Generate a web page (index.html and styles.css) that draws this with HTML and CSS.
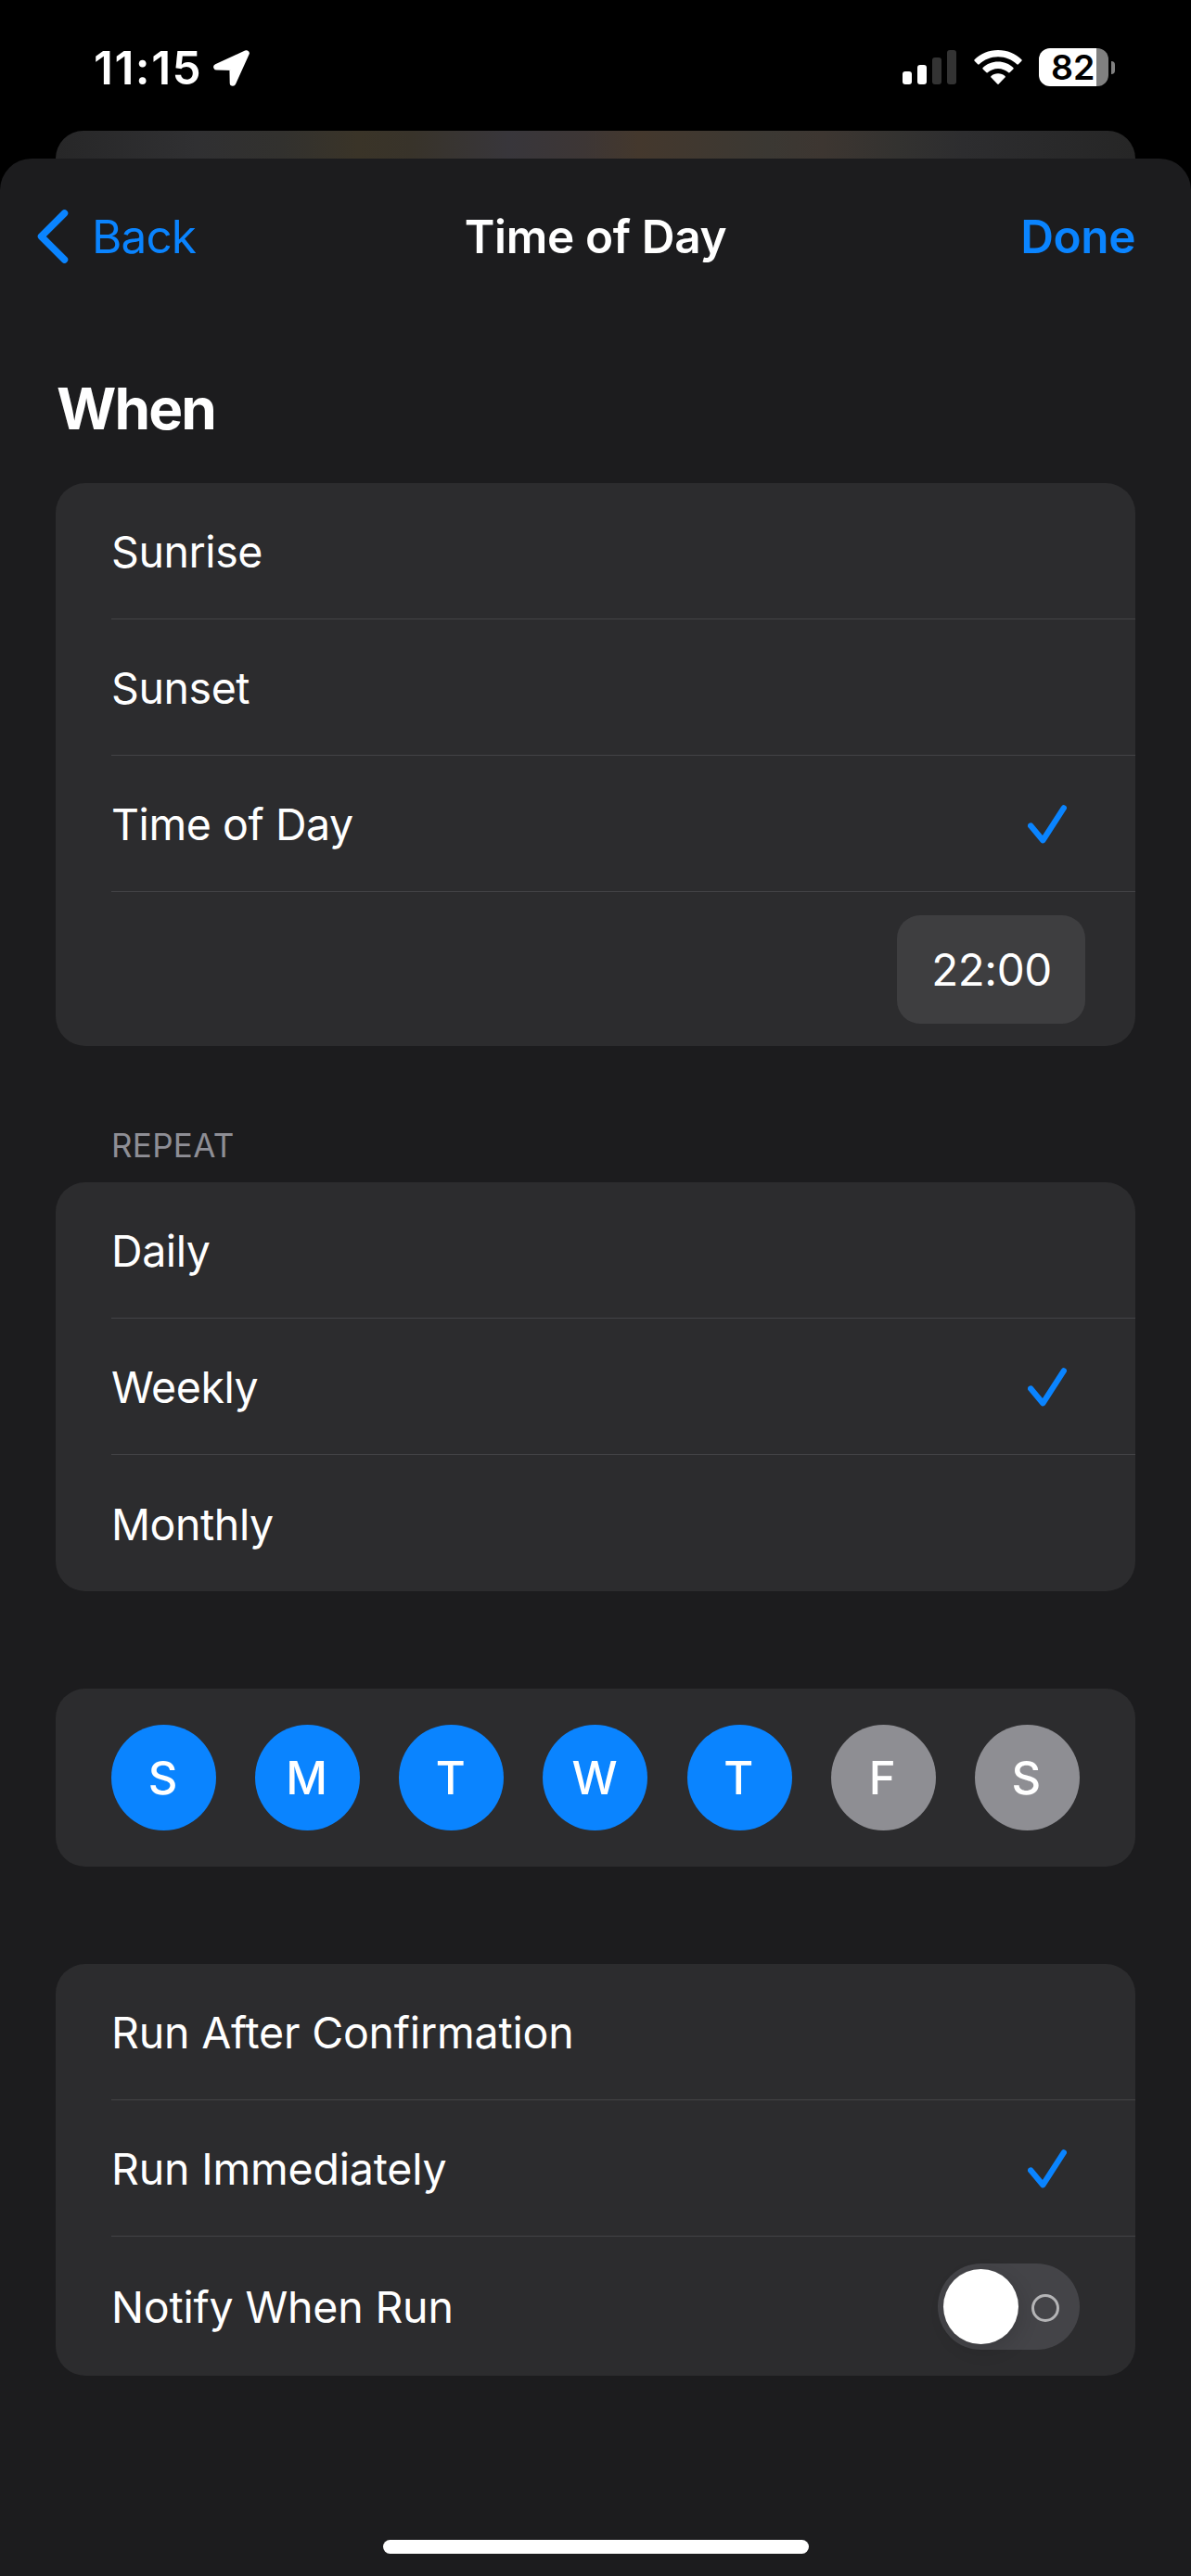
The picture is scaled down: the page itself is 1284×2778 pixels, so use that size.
FILE: index.html
```html
<!DOCTYPE html>
<html lang="en">
<head>
<meta charset="utf-8">
<title>Time of Day</title>
<link rel="stylesheet" href="styles.css">
</head>
<body>
<div class="status">
  <div class="status-left">
    <span class="clock">11:15</span>
    <svg class="location" width="40" height="40" viewBox="0 0 40 40"><path d="M35.500 4.500 3.500 19.300 20.700 19.800 21 36.500z" fill="#fff" stroke="#fff" stroke-width="6.600" stroke-linejoin="round"/></svg>
  </div>
  <div class="status-right">
    <svg class="signal" width="58" height="37" viewBox="0 0 58 37">
      <rect x="0" y="23" width="10" height="14" rx="3" fill="#fff"/>
      <rect x="16" y="16" width="10" height="21" rx="3" fill="#fff"/>
      <rect x="32" y="8" width="10" height="29" rx="3" fill="#333"/>
      <rect x="48" y="0" width="10" height="37" rx="3" fill="#333"/>
    </svg>
    <svg class="wifi" width="52" height="37" viewBox="0 0 52 37" fill="#fff">
      <path d="M26 0C16 0 7 3.800.6 10.200c-.5.5-.5 1.100 0 1.600l3.500 3.500c.5.500 1.100.5 1.600 0C11 10.200 18 7.200 26 7.200s15 3 20.300 8.100c.5.500 1.100.5 1.600 0l3.500-3.500c.5-.5.5-1.100 0-1.600C45 3.800 36 0 26 0z"/>
      <path d="M26 12.600c-6.300 0-12 2.400-16.400 6.300-.5.5-.5 1.100 0 1.600l3.600 3.600c.5.5 1 .5 1.500.1 3-2.700 7-4.300 11.300-4.300s8.300 1.600 11.300 4.300c.5.400 1 .4 1.500-.1l3.600-3.600c.5-.5.5-1.100 0-1.600C38 15 32.300 12.600 26 12.600z"/>
      <path d="M26 25.300c-2.900 0-5.500 1-7.500 2.700-.5.500-.5 1 0 1.600l6.700 6.900c.5.500 1.100.5 1.600 0l6.700-6.900c.5-.6.5-1.100 0-1.600-2-1.700-4.600-2.700-7.500-2.700z"/>
    </svg>
    <div class="battery"><span class="battery-body">82</span><span class="battery-tip"></span></div>
  </div>
</div>
<div class="sheet-behind"></div>
<main class="sheet">
  <header class="nav">
    <a class="back"><svg width="34" height="58" viewBox="0 0 34 58"><path d="M29.500 4 4.500 29l25 25" fill="none" stroke="currentColor" stroke-width="7.500" stroke-linecap="round" stroke-linejoin="round"/></svg><span>Back</span></a>
    <h1 class="title">Time of Day</h1>
    <a class="done">Done</a>
  </header>
  <h2 class="heading">When</h2>
  <section class="card">
    <div class="row"><span>Sunrise</span></div>
    <div class="row"><span>Sunset</span></div>
    <div class="row"><span>Time of Day</span><svg class="check" width="42" height="42" viewBox="0 0 42 42"><path d="M3.200 22.500 16.300 38.200 38.800 3.400"/></svg></div>
    <div class="row row-time"><span class="time">22:00</span></div>
  </section>
  <h3 class="label">REPEAT</h3>
  <section class="card">
    <div class="row"><span>Daily</span></div>
    <div class="row"><span>Weekly</span><svg class="check" width="42" height="42" viewBox="0 0 42 42"><path d="M3.200 22.500 16.300 38.200 38.800 3.400"/></svg></div>
    <div class="row"><span>Monthly</span></div>
  </section>
  <section class="card days">
    <span class="day on">S</span><span class="day on">M</span><span class="day on">T</span><span class="day on">W</span><span class="day on">T</span><span class="day">F</span><span class="day">S</span>
  </section>
  <section class="card run-options">
    <div class="row"><span>Run After Confirmation</span></div>
    <div class="row"><span>Run Immediately</span><svg class="check" width="42" height="42" viewBox="0 0 42 42"><path d="M3.200 22.500 16.300 38.200 38.800 3.400"/></svg></div>
    <div class="row row-switch"><span>Notify When Run</span><span class="switch"><span class="knob"></span><span class="ring"></span></span></div>
  </section>
  <div class="home"></div>
</main>
</body>
</html>
```
FILE: styles.css
```css
* { box-sizing: border-box; margin: 0; padding: 0; }
body {
  width: 1284px; height: 2778px; overflow: hidden;
  background: #000; color: #fff;
  font-family: Inter, "Liberation Sans", sans-serif;
  font-size: 46.5px;
  display: flex; flex-direction: column;
}
svg { display: block; flex: none; }
.status {
  height: 141px; padding: 0 82px 0 101px;
  display: flex; justify-content: space-between; align-items: flex-start;
}
.status-left { display: flex; padding-top: 53px; gap: 12px; }
.clock { font-size: 49.5px; font-weight: 600; line-height: 40px; letter-spacing: 1.5px; }
.status-right { display: flex; padding-top: 52px; }
.signal { margin-top: 2px; }
.wifi { margin: 2px 18px 0 19px; }
.battery { display: flex; align-items: center; gap: 3px; }
.battery-body {
  width: 75px; height: 41px; border-radius: 12px;
  background: linear-gradient(90deg, #fff 62px, #808080 62px);
  color: #000; font-weight: 600; font-size: 37.5px; line-height: 41px;
  padding-left: 13px;
}
.battery-tip { width: 4px; height: 14px; border-radius: 0 5px 5px 0; background: #808080; }
.sheet-behind {
  height: 30px; margin: 0 60px; border-radius: 32px 32px 0 0;
  background: linear-gradient(90deg, #272728 0, #303032 13%, #32312e 21%, #3a3428 28%, #38332a 33%, #38363b 42%, #3d3635 49%, #44382d 54%, #3b3833 66%, #3d3631 71%, #333230 78%, #2d2d2f 84%, #262626 100%);
}
.sheet {
  flex: 1; background: #1c1c1e; border-radius: 34px 34px 0 0;
  padding: 0 60px; display: flex; flex-direction: column;
}
.nav {
  height: 168px; flex: none;
  display: grid; grid-template-columns: 1fr auto 1fr; align-items: center;
  font-size: 49.5px; line-height: 60px;
}
.back { color: #0a84ff; display: flex; align-items: center; gap: 25px; letter-spacing: -.9px; margin-left: -20px; }
.title { font-size: 49.5px; font-weight: 600; letter-spacing: -.35px; }
.done { color: #0a84ff; font-weight: 600; text-align: right; letter-spacing: -.4px; }
.heading { font-size: 62px; font-weight: 700; line-height: 76px; margin: 64px 0 42px 1px; letter-spacing: -1.9px; }
.card { background: #2c2c2e; border-radius: 32px; flex: none; }
.row {
  height: 147px; margin-left: 60px; padding: 2px 74px 0 0;
  border-bottom: 1px solid #434346; letter-spacing: -.43px;
  display: flex; align-items: center; justify-content: space-between;
}
.run-options .row { letter-spacing: -.2px; }
.row:last-child { border-bottom: 0; }
.check { fill: none; stroke: #0a84ff; stroke-width: 6.300; stroke-linecap: round; stroke-linejoin: round; }
.row-time { height: 166px; justify-content: flex-end; padding: 0 54px 0 0; }
.time {
  width: 203px; height: 117px; border-radius: 25px; background: #3e3e40;
  text-align: center; line-height: 117px; font-size: 47.5px; letter-spacing: -.4px; padding-left: 1px;
}
.label { font-size: 35px; font-weight: 400; color: #8e8e95; line-height: 44px; margin: 85px 0 18px 60px; letter-spacing: .3px; }
.days { height: 192px; margin: 105px 0; padding: 0 60px; display: flex; align-items: center; justify-content: space-between; }
.day {
  width: 113px; height: 114px; border-radius: 50%; background: #8e8e93;
  text-align: center; line-height: 116px; font-size: 49px; font-weight: 500; padding-right: 2px;
}
.day.on { background: #0a84ff; }
.run-options .row-switch { height: 150px; padding: 1px 60px 0 0; }
.switch {
  width: 153px; height: 93px; border-radius: 47px; background: #444448;
  display: flex; align-items: center; padding-left: 6px; gap: 14px;
}
.knob { width: 81px; height: 81px; border-radius: 50%; background: #fff; box-shadow: 4px 6px 20px rgba(0,0,0,.12); }
.ring { width: 30px; height: 30px; border-radius: 50%; border: 3px solid #b4b4b6; margin-top: 3px; }
.home { width: 459px; height: 15px; border-radius: 8px; background: #fff; margin: auto 0 24px 353px; }
```
